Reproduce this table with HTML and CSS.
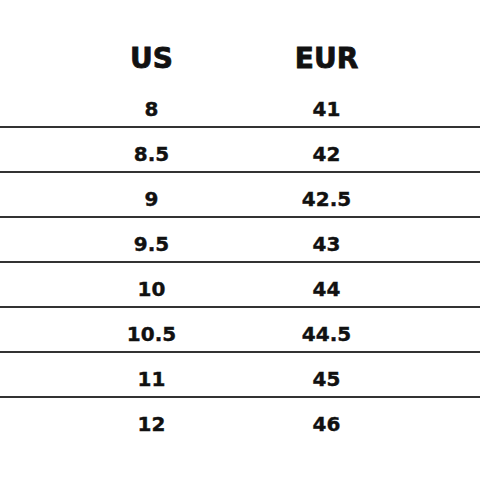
FILE: index.html
```html
<!DOCTYPE html>
<html>
<head>
<meta charset="utf-8">
<link rel="stylesheet" href="styles.css">
</head>
<body>
<div class="chart">
  <div class="row head"><div>US</div><div>EUR</div></div>
  <div class="row"><div>8</div><div>41</div></div>
  <div class="row"><div>8.5</div><div>42</div></div>
  <div class="row"><div>9</div><div>42.5</div></div>
  <div class="row"><div>9.5</div><div>43</div></div>
  <div class="row"><div>10</div><div>44</div></div>
  <div class="row"><div>10.5</div><div>44.5</div></div>
  <div class="row"><div>11</div><div>45</div></div>
  <div class="row last"><div>12</div><div>46</div></div>
</div>
</body>
</html>
```
FILE: styles.css
```css
html, body {
  margin: 0;
  padding: 0;
  background: #fff;
}
.chart {
  width: 480px;
  font-family: "DejaVu Sans", Verdana, sans-serif;
  font-weight: bold;
  color: #111;
}
.row {
  display: grid;
  grid-template-columns: 175px 175px;
  padding: 15px 0 5px 64px;
  font-size: 20px;
  line-height: 23px;
  text-align: center;
  border-bottom: 2px solid #333;
  -webkit-text-stroke: 0.4px #111;
}
.row.head {
  font-size: 28px;
  line-height: 34px;
  padding-top: 42px;
  padding-bottom: 7px;
  border-bottom: none;
  -webkit-text-stroke: 0.8px #111;
}
.row.last {
  border-bottom: none;
}
```
